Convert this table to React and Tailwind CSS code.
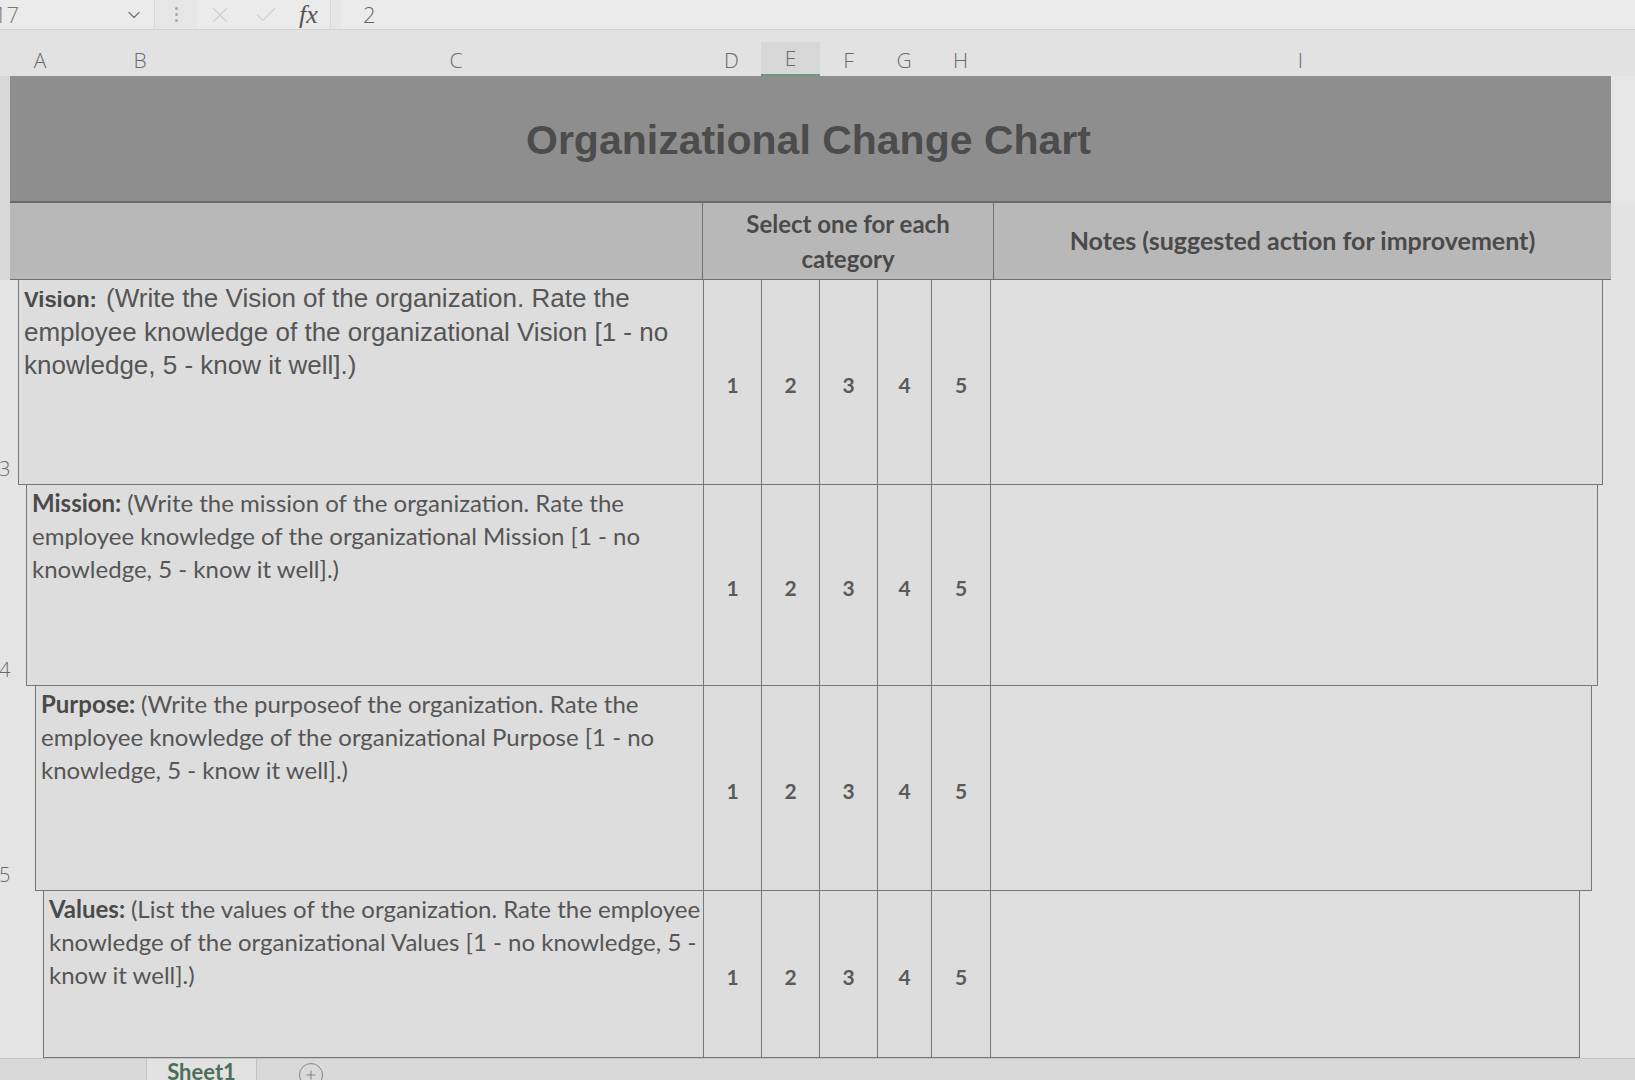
import { ChevronDown, X, Check, Plus } from "lucide-react";

const cols = [
  { l: "A", w: "w-[60px]" },
  { l: "B", w: "w-[140px]" },
  { l: "C", w: "w-[492px]" },
  { l: "D", w: "w-[59px]" },
  { l: "E", w: "w-[59px]", sel: true },
  { l: "F", w: "w-[57px]" },
  { l: "G", w: "w-[54px]" },
  { l: "H", w: "w-[59px]" },
  { l: "I", w: "w-[621px]" },
];

const rows = [
  {
    n: "3",
    label: "Vision:",
    lines: [
      "(Write the Vision of the organization. Rate the",
      "employee knowledge of the organizational Vision [1 - no",
      "knowledge, 5 - know it well].)",
    ],
    arial: true,
    h: "h-[205px]",
    gutter: "w-[18px]",
    labelW: "w-[685px]",
    notesW: "w-[613px]",
  },
  {
    n: "4",
    label: "Mission:",
    lines: [
      "(Write the mission of the organization. Rate the",
      "employee knowledge of the organizational Mission [1 - no",
      "knowledge, 5 - know it well].)",
    ],
    h: "h-[201px]",
    gutter: "w-[26px]",
    labelW: "w-[677px]",
    notesW: "w-[608px]",
  },
  {
    n: "5",
    label: "Purpose:",
    lines: [
      "(Write the purposeof the organization. Rate the",
      "employee knowledge of the organizational Purpose [1 - no",
      "knowledge, 5 - know it well].)",
    ],
    h: "h-[205px]",
    gutter: "w-[35px]",
    labelW: "w-[668px]",
    notesW: "w-[602px]",
  },
  {
    n: "",
    label: "Values:",
    lines: [
      "(List the values of the organization. Rate the employee",
      "knowledge of the organizational Values [1 - no knowledge, 5 -",
      "know it well].)",
    ],
    h: "h-[167px]",
    gutter: "w-[43px]",
    labelW: "w-[660px]",
    notesW: "w-[590px]",
  },
];

const numW = ["w-[58px]", "w-[58px]", "w-[58px]", "w-[54px]", "w-[59px]"];

function BodyRow({ r }) {
  return (
    <div className={`flex ${r.h} shrink-0`}>
      <div className={`${r.gutter} shrink-0 flex items-end pb-[6px] text-[20px] text-[#6a6a6a] font-['Open_Sans',sans-serif] font-light leading-none`}>
        <span className="-ml-[1px]">{r.n}</span>
      </div>
      <div
        className={`${r.labelW} shrink-0 border-l border-b border-[#777] bg-[#dddddd] pl-[5px] whitespace-nowrap text-[#555] ${
          r.arial
            ? "font-['Liberation_Sans',Arial,sans-serif] text-[26px] leading-[33px] pt-[2px]"
            : "font-['Lato',sans-serif] text-[24px] leading-[33px] pt-[1px]"
        }`}
      >
        {r.lines.map((t, i) => (
          <div key={i}>
            {i === 0 && (
              <span className={`font-bold text-[#4a4a4a] ${r.arial ? "text-[22px] mr-[3px]" : ""}`}>{r.label} </span>
            )}
            {t}
          </div>
        ))}
      </div>
      {[1, 2, 3, 4, 5].map((n, i) => (
        <div
          key={n}
          className={`${numW[i]} shrink-0 border-l border-b border-[#777] bg-[#dddddd] flex items-center justify-center pt-[6px] font-['Lato',sans-serif] font-bold text-[21px] text-[#5a5a5a]`}
        >
          {n}
        </div>
      ))}
      <div className={`${r.notesW} shrink-0 border-l border-r border-b border-[#777] bg-[#dedede]`} />
      <div className="flex-1 bg-[#e3e3e3]" />
    </div>
  );
}

export default function App() {
  return (
    <div className="w-[1635px] h-[1080px] overflow-hidden bg-[#e4e4e4] flex flex-col">
      {/* formula bar */}
      <div className="h-[30px] shrink-0 flex items-stretch bg-[#e6e6e6] border-b border-[#d2d2d2] text-[#777]">
        <div className="w-[155px] shrink-0 flex items-center justify-between bg-[#ebebeb] rounded-br-[4px] border-r border-[#d6d6d6] pr-[10px]">
          <span className="-ml-[6px] text-[22px] font-['Open_Sans',sans-serif] font-light">17</span>
          <ChevronDown size={20} strokeWidth={1.5} className="text-[#777]" />
        </div>
        <div className="w-[42px] shrink-0 flex flex-col items-center justify-center gap-[3px]">
          <span className="w-[3px] h-[3px] bg-[#aaa] rounded-full" />
          <span className="w-[3px] h-[3px] bg-[#aaa] rounded-full" />
          <span className="w-[3px] h-[3px] bg-[#aaa] rounded-full" />
        </div>
        <div className="w-[134px] shrink-0 flex items-center gap-[20px] pl-[10px] bg-[#ebebeb] rounded-b-[4px] border-r border-[#d6d6d6]">
          <X size={26} strokeWidth={1} className="text-[#cfcfcf]" />
          <Check size={26} strokeWidth={1} className="text-[#cfcfcf]" />
          <span className="font-['Liberation_Serif',serif] italic text-[26px] text-[#555] leading-none">fx</span>
        </div>
        <div className="flex-1 ml-[10px] bg-[#ebebeb] rounded-bl-[4px] flex items-center pl-[22px]">
          <span className="text-[22px] font-['Open_Sans',sans-serif] font-light text-[#666]">2</span>
        </div>
      </div>

      {/* column headers */}
      <div className="h-[46px] shrink-0 flex bg-[#e2e2e2]">
        <div className="w-[10px] shrink-0" />
        {cols.map((c) => (
          <div
            key={c.l}
            className={`${c.w} shrink-0 flex items-end justify-center text-[21px] font-['Open_Sans',sans-serif] font-light text-[#6a6a6a] ${
              c.sel ? "bg-[#d7d7d7] border-b-2 border-[#6d9a78] mt-[12px]" : ""
            }`}
          >
            {c.l}
          </div>
        ))}
        <div className="flex-1" />
      </div>

      {/* title band */}
      <div className="h-[127px] shrink-0 flex">
        <div className="w-[10px] shrink-0 bg-[#d8d8d8]" />
        <div className="w-[1601px] shrink-0 bg-[#8e8e8e] border-b-2 border-[#6a6a6a] flex items-center justify-center pt-[4px]">
          <span className="font-['Liberation_Sans',Arial,sans-serif] font-bold text-[41px] text-[#4c4c4c] ml-[-4px]">
            Organizational Change Chart
          </span>
        </div>
        <div className="flex-1 bg-[#e6e6e6]" />
      </div>

      {/* header row 2 */}
      <div className="h-[77px] shrink-0 flex">
        <div className="w-[10px] shrink-0 bg-[#d8d8d8]" />
        <div className="w-[692px] shrink-0 bg-[#b8b8b8] border-b border-[#6f6f6f]" />
        <div className="w-[291px] shrink-0 bg-[#b8b8b8] border-l border-b border-[#6f6f6f] flex flex-col items-center justify-center font-['Lato',sans-serif] font-bold text-[24px] leading-[35px] text-[#4a4a4a]">
          <span>Select one for each</span>
          <span>category</span>
        </div>
        <div className="w-[618px] shrink-0 bg-[#b8b8b8] border-l border-b border-[#6f6f6f] flex items-center justify-center font-['Lato',sans-serif] font-bold text-[25px] text-[#4a4a4a]">
          Notes (suggested action for improvement)
        </div>
        <div className="flex-1 bg-[#e3e3e3]" />
      </div>

      {/* body rows */}
      {rows.map((r) => (
        <BodyRow key={r.label} r={r} />
      ))}

      {/* sheet tabs */}
      <div className="flex-1 flex items-stretch bg-[#d9d9d9] border-t border-[#c4c4c4] overflow-hidden">
        <div className="w-[146px] shrink-0" />
        <div className="w-[111px] shrink-0 bg-[#e2e2e2] border-x border-[#c4c4c4] flex justify-center">
          <span className="font-['Lato',sans-serif] font-bold text-[22px] text-[#4d6e58] leading-[26px]">Sheet1</span>
        </div>
        <div className="w-[42px] shrink-0" />
        <div className="mt-[4px] w-[24px] h-[24px] rounded-full border border-[#888] flex items-center justify-center">
          <Plus size={14} strokeWidth={1.5} className="text-[#777]" />
        </div>
      </div>
    </div>
  );
}
